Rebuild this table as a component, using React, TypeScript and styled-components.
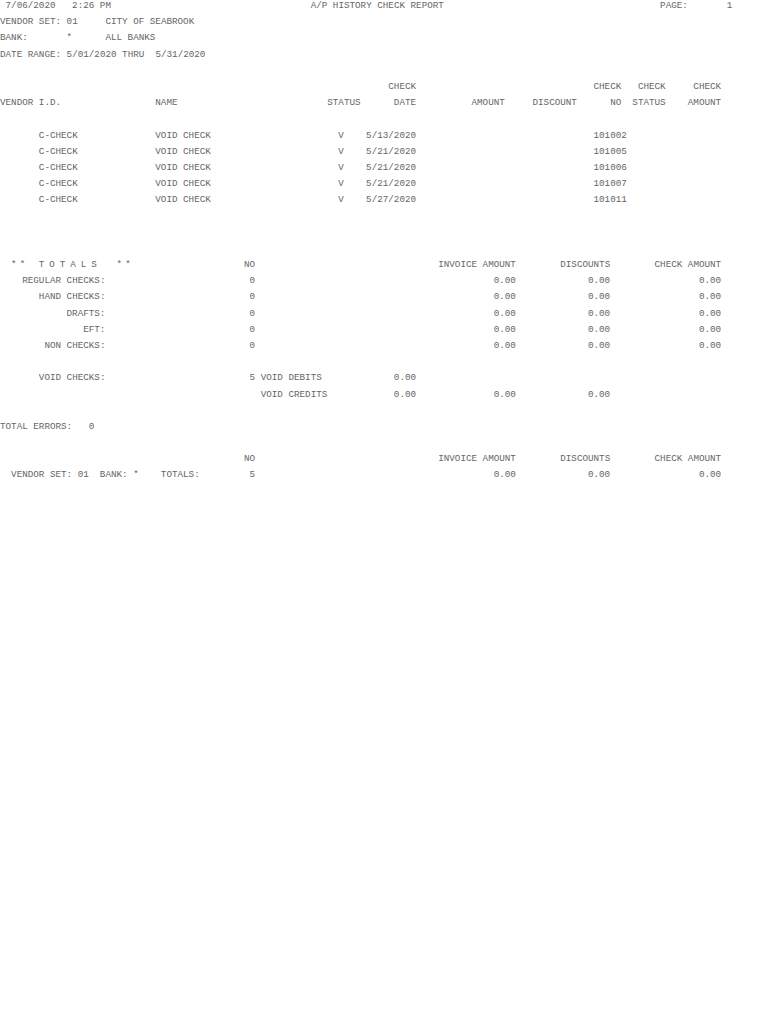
import React from "react";
import styled, { createGlobalStyle } from "styled-components";

const LINE = 16.19;

const Global = createGlobalStyle`
  html, body { margin: 0; padding: 0; background: #ffffff; }
`;

const Report = styled.main`
  margin-top: -2px;
  width: 770px;
  font-family: "Liberation Mono", "Courier New", monospace;
  font-size: 9.26px;
  line-height: ${LINE}px;
  color: #666666;
`;

const Line = styled.div`
  display: grid;
  grid-template-columns: repeat(134, 1ch);
  height: ${LINE}px;
  white-space: pre;
`;

const HeaderLine = styled(Line)``;
const ColumnHeadLine = styled(Line)``;
const DetailLine = styled(Line)``;
const TotalLine = styled(Line)``;

const Blank = styled.div<{ $lines?: number }>`
  height: ${(p) => LINE * (p.$lines ?? 1)}px;
`;

const Cell = styled.span<{ $col: number; $span: number; $align?: "left" | "right"; $track?: number }>`
  grid-row: 1;
  grid-column: ${(p) => p.$col + 1} / span ${(p) => p.$span};
  text-align: ${(p) => p.$align ?? "left"};
  letter-spacing: ${(p) => p.$track ?? 0}px;
`;

type FProps = { at?: number; end?: number; track?: number; children: string };

const F: React.FC<FProps> = ({ at, end, track, children }) => {
  const len = children.length;
  const col = at !== undefined ? at : (end as number) - len + 1;
  return (
    <Cell $col={col} $span={len} $align={end !== undefined ? "right" : "left"} $track={track}>
      {children}
    </Cell>
  );
};

const details = [
  { date: "5/13/2020", no: "101002" },
  { date: "5/21/2020", no: "101005" },
  { date: "5/21/2020", no: "101006" },
  { date: "5/21/2020", no: "101007" },
  { date: "5/27/2020", no: "101011" },
];

const totals = ["REGULAR CHECKS:", "HAND CHECKS:", "DRAFTS:", "EFT:", "NON CHECKS:"];

const AmountHeads: React.FC = () => (
  <>
    <F at={44}>NO</F>
    <F at={79}>INVOICE AMOUNT</F>
    <F end={109}>DISCOUNTS</F>
    <F at={118}>CHECK AMOUNT</F>
  </>
);

export default function App() {
  return (
    <>
      <Global />
      <Report>
        <HeaderLine>
          <F at={1}>7/06/2020</F>
          <F at={13}>2:26 PM</F>
          <F at={56}>A/P HISTORY CHECK REPORT</F>
          <F at={119}>PAGE:</F>
          <F at={131}>1</F>
        </HeaderLine>
        <HeaderLine>
          <F at={0}>VENDOR SET: 01</F>
          <F at={19}>CITY OF SEABROOK</F>
        </HeaderLine>
        <HeaderLine>
          <F at={0}>BANK:</F>
          <F at={12}>*</F>
          <F at={19}>ALL BANKS</F>
        </HeaderLine>
        <HeaderLine>
          <F at={0}>DATE RANGE: 5/01/2020 THRU  5/31/2020</F>
        </HeaderLine>
        <Blank />
        <ColumnHeadLine>
          <F end={74}>CHECK</F>
          <F end={111}>CHECK</F>
          <F end={119}>CHECK</F>
          <F end={129}>CHECK</F>
        </ColumnHeadLine>
        <ColumnHeadLine>
          <F at={0}>VENDOR I.D.</F>
          <F at={28}>NAME</F>
          <F at={59}>STATUS</F>
          <F end={74}>DATE</F>
          <F at={85}>AMOUNT</F>
          <F at={96}>DISCOUNT</F>
          <F end={111}>NO</F>
          <F end={119}>STATUS</F>
          <F end={129}>AMOUNT</F>
        </ColumnHeadLine>
        <Blank />
        {details.map((d) => (
          <DetailLine key={d.no}>
            <F at={7}>C-CHECK</F>
            <F at={28}>VOID CHECK</F>
            <F at={61}>V</F>
            <F at={66}>{d.date}</F>
            <F at={107}>{d.no}</F>
          </DetailLine>
        ))}
        <Blank $lines={3} />
        <TotalLine>
          <F at={2} track={-1.2}>* *</F>
          <F at={7} track={-0.3}>T O T A L S</F>
          <F at={21} track={-1.2}>* *</F>
          <AmountHeads />
        </TotalLine>
        {totals.map((t) => (
          <TotalLine key={t}>
            <F end={18}>{t}</F>
            <F at={45}>0</F>
            <F end={92}>0.00</F>
            <F end={109}>0.00</F>
            <F end={129}>0.00</F>
          </TotalLine>
        ))}
        <Blank />
        <TotalLine>
          <F end={18}>VOID CHECKS:</F>
          <F at={45}>5 VOID DEBITS</F>
          <F at={71}>0.00</F>
        </TotalLine>
        <TotalLine>
          <F at={47}>VOID CREDITS</F>
          <F at={71}>0.00</F>
          <F end={92}>0.00</F>
          <F end={109}>0.00</F>
        </TotalLine>
        <Blank />
        <TotalLine>
          <F at={0}>TOTAL ERRORS:</F>
          <F at={16}>0</F>
        </TotalLine>
        <Blank />
        <TotalLine>
          <AmountHeads />
        </TotalLine>
        <TotalLine>
          <F at={2}>VENDOR SET: 01</F>
          <F at={18}>BANK:</F>
          <F at={24}>*</F>
          <F at={29}>TOTALS:</F>
          <F at={45}>5</F>
          <F end={92}>0.00</F>
          <F end={109}>0.00</F>
          <F end={129}>0.00</F>
        </TotalLine>
      </Report>
    </>
  );
}
